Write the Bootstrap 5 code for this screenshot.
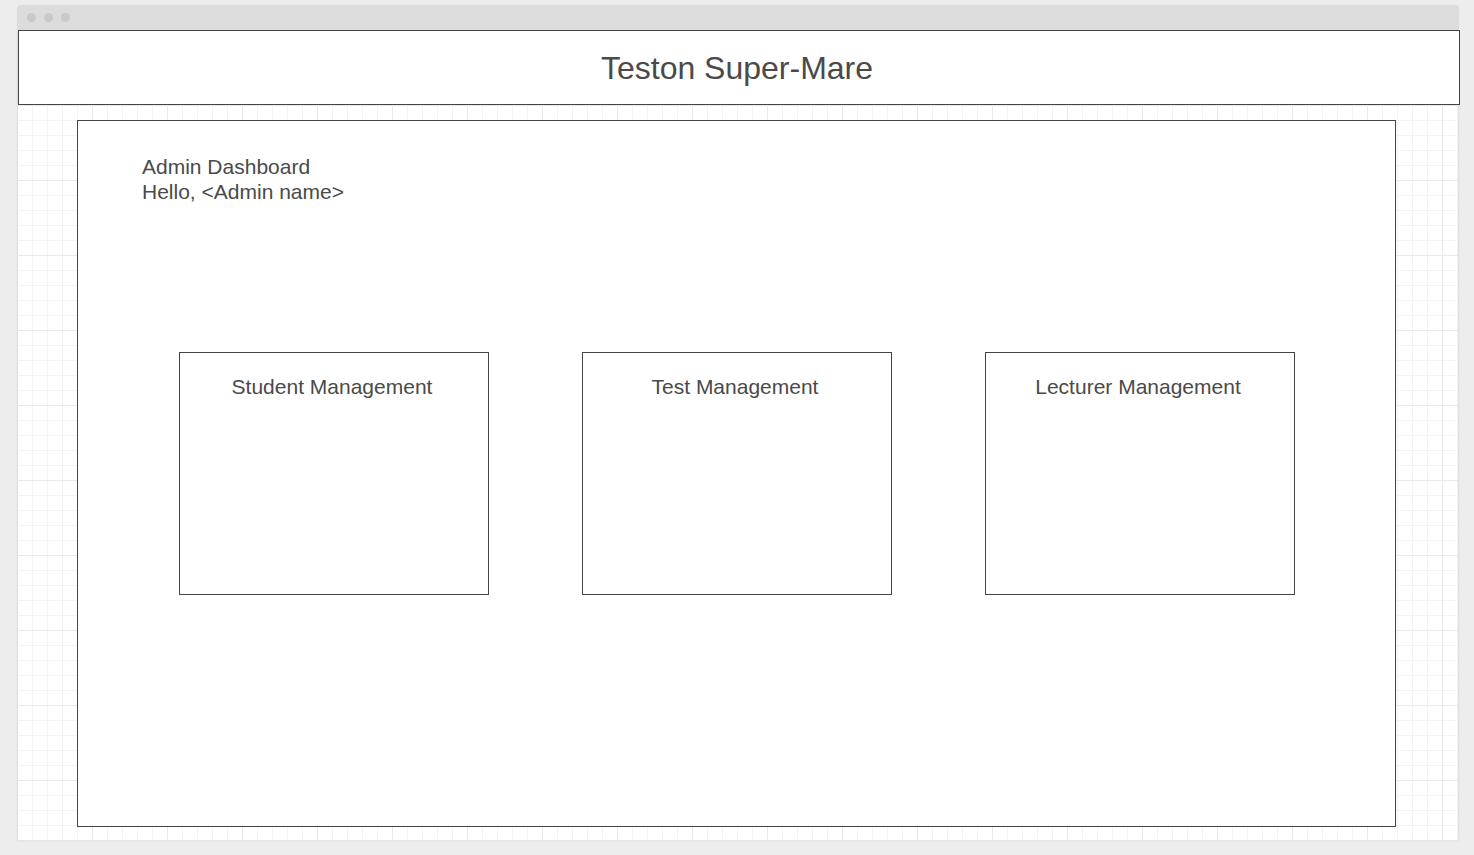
<!DOCTYPE html>
<html lang="en">
<head>
<meta charset="utf-8">
<meta name="viewport" content="width=device-width, initial-scale=1">
<title>Teston Super-Mare</title>
<link href="https://cdn.jsdelivr.net/npm/bootstrap@5.3.0/dist/css/bootstrap.min.css" rel="stylesheet">
<style>
  body {
    background: #ededed;
    color: #4a4a4a;
    font-family: "Liberation Sans", Arial, sans-serif;
    font-size: 21px;
    line-height: 25px;
    padding: 5px 15px 15px 17px;
  }
  .outline { background: #fff; border: 1px solid #444; }
  .window-bar {
    background: #dcdcdc;
    height: 25px;
    border-radius: 4px 4px 0 0;
    padding: 0 10px;
    gap: 8px;
  }
  .window-dot { width: 9px; height: 9px; background: #c9c9c9; }
  .sheet {
    border: solid #e0e0e0;
    border-width: 0 1px;
    box-shadow: 0 1px 2px #e0e0e0;
    background-color: #fff;
    background-image:
      linear-gradient(90deg, #e9e9e9 1px, transparent 1px),
      linear-gradient(#e9e9e9 1px, transparent 1px),
      linear-gradient(90deg, #f3f3f3 1px, transparent 1px),
      linear-gradient(#f3f3f3 1px, transparent 1px);
    background-size: 75px 75px, 75px 75px, 15px 15px, 15px 15px;
    background-position: 74px 0, 0 0, 14px 0, 0 0;
    min-height: calc(100vh - 45px);
    padding-bottom: 13px;
  }
  .banner { height: 75px; margin-right: -2px; padding-right: 4px; }
  .banner h1 { font-size: 32px; line-height: 38px; }
  .panel { margin: 15px 62px 0 59px; padding: 33px 100px 0 101px; }
  .greeting { margin-left: -37px; margin-bottom: 148px; }
  .tiles { gap: 93px; }
  .tile { min-height: 243px; padding: 21px 4px 0 0; }
  .tile h2, .greeting h2 { font-size: 21px; line-height: 25px; }
</style>
</head>
<body>
  <div class="window-bar d-flex align-items-center" aria-hidden="true">
    <span class="window-dot rounded-circle"></span>
    <span class="window-dot rounded-circle"></span>
    <span class="window-dot rounded-circle"></span>
  </div>
  <div class="sheet d-flex flex-column">
    <header class="banner outline d-flex align-items-center justify-content-center">
      <h1 class="fw-normal m-0">Teston Super-Mare</h1>
    </header>
    <main class="panel outline flex-grow-1">
      <div class="greeting">
        <h2 class="fw-normal m-0">Admin Dashboard</h2>
        <p class="m-0">Hello, &lt;Admin name&gt;</p>
      </div>
      <div class="tiles d-flex">
        <section class="tile outline col text-center"><h2 class="fw-normal m-0">Student Management</h2></section>
        <section class="tile outline col text-center"><h2 class="fw-normal m-0">Test Management</h2></section>
        <section class="tile outline col text-center"><h2 class="fw-normal m-0">Lecturer Management</h2></section>
      </div>
    </main>
  </div>
<script src="https://cdn.jsdelivr.net/npm/bootstrap@5.3.0/dist/js/bootstrap.bundle.min.js"></script>
</body>
</html>
